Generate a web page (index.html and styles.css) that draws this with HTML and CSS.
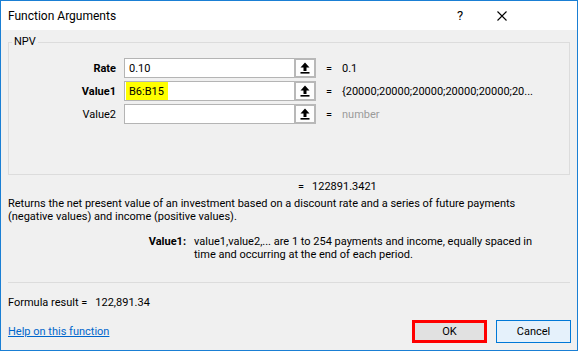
FILE: index.html
```html
<!DOCTYPE html>
<html>
<head>
<meta charset="utf-8">
<link rel="stylesheet" href="styles.css">
</head>
<body>
<div class="window">
  <div class="titlebar">
    <span class="title">Function Arguments</span>
    <span class="help">?</span>
    <span class="close">
      <svg width="10" height="10" viewBox="0 0 10 10"><path d="M0.5 0.5 L9.5 9.5 M9.5 0.5 L0.5 9.5" stroke="#000" stroke-width="1.1" fill="none"/></svg>
    </span>
  </div>
  <div class="content">
    <fieldset class="group">
      <legend>NPV</legend>
      <div class="args">
        <label class="lbl bold">Rate</label>
        <div class="input"><span>0.10</span></div>
        <button class="ref"><svg width="10" height="12" viewBox="0 0 10 12"><path d="M5 0.5 L9.5 5.5 L6.5 5.5 L6.5 9 L3.5 9 L3.5 5.5 L0.5 5.5 Z" fill="#000"/><rect x="0.5" y="10" width="9" height="1.6" fill="#000"/></svg></button>
        <span class="eq">=</span>
        <span class="val">0.1</span>

        <label class="lbl bold">Value1</label>
        <div class="input"><span class="hl">B6:B15</span></div>
        <button class="ref"><svg width="10" height="12" viewBox="0 0 10 12"><path d="M5 0.5 L9.5 5.5 L6.5 5.5 L6.5 9 L3.5 9 L3.5 5.5 L0.5 5.5 Z" fill="#000"/><rect x="0.5" y="10" width="9" height="1.6" fill="#000"/></svg></button>
        <span class="eq">=</span>
        <span class="val">{20000;20000;20000;20000;20000;20...</span>

        <label class="lbl">Value2</label>
        <div class="input"></div>
        <button class="ref"><svg width="10" height="12" viewBox="0 0 10 12"><path d="M5 0.5 L9.5 5.5 L6.5 5.5 L6.5 9 L3.5 9 L3.5 5.5 L0.5 5.5 Z" fill="#000"/><rect x="0.5" y="10" width="9" height="1.6" fill="#000"/></svg></button>
        <span class="eq">=</span>
        <span class="val muted">number</span>
      </div>
    </fieldset>
    <div class="result"><span class="eq2">=</span><span>122891.3421</span></div>
    <p class="desc">Returns the net present value of an investment based on a discount rate and a series of future payments (negative values) and income (positive values).</p>
    <div class="argdesc">
      <span class="argname">Value1:</span>
      <span class="argtext">value1,value2,... are 1 to 254 payments and income, equally spaced in time and occurring at the end of each period.</span>
    </div>
    <div class="sep"></div>
    <div class="formula"><span>Formula result =</span><span class="fval">122,891.34</span></div>
    <div class="footer">
      <a class="helplink" href="#">Help on this function</a>
      <div class="buttons">
        <button class="btn ok">OK</button>
        <button class="btn cancel">Cancel</button>
      </div>
    </div>
  </div>
</div>
</body>
</html>
```
FILE: styles.css
```css
* { box-sizing: border-box; }
html, body { margin: 0; padding: 0; }
body {
  font-family: "Segoe UI", Roboto, "Liberation Sans", sans-serif;
  font-size: 11px;
  color: #000;
  background: #fff;
}
.window {
  width: 578px;
  height: 351px;
  border: 1px solid #1a7fd4;
  background: #f0f0f0;
  display: flex;
  flex-direction: column;
}
.titlebar {
  height: 29px;
  background: #fff;
  display: flex;
  align-items: center;
  padding-left: 7px;
  font-size: 12px;
}
.title { flex: 1; }
.help { width: 40px; font-size: 13px; }
.close { width: 10px; display: flex; align-items: center; margin-right: 70px; }
.content {
  flex: 1;
  padding: 0 7px;
  display: flex;
  flex-direction: column;
}
.group {
  margin: 5px 0 0 0;
  padding: 0 0 50px 0;
  border: 1px solid #dcdcdc;
  min-width: 0;
}
.group legend {
  margin-left: 3px;
  padding: 0 2px;
  font-size: 11px;
  line-height: 14px;
}
.args {
  display: grid;
  grid-template-columns: 115px 170px 22px 26px 1fr;
  grid-auto-rows: 20px;
  row-gap: 3px;
  margin-top: 9px;
  align-items: center;
}
.lbl { text-align: right; padding-right: 8px; }
.bold { font-weight: bold; }
.input {
  height: 20px;
  background: #fff;
  border: 1px solid #b4b4b4;
  border-right: none;
  display: flex;
  align-items: center;
  padding-left: 1px;
}
.input span { padding-left: 3px; }
.input .hl {
  background: #ffff00;
  height: 18px;
  display: flex;
  align-items: center;
  padding: 0 4px 0 3px;
}
.ref {
  height: 20px;
  width: 22px;
  border: 2px solid #b8b8b8;
  background: #fdfdfd;
  padding: 0;
  display: flex;
  align-items: center;
  justify-content: center;
}
.eq { padding-left: 10px; }
.val { white-space: nowrap; }
.muted { color: #9b9b9b; }
.result {
  margin-top: 5px;
  padding-left: 290px;
  height: 14px;
  line-height: 14px;
}
.eq2 { margin-right: 8px; }
.desc {
  margin: 3px 0 0 0;
  line-height: 13px;
  max-width: 525px;
}
.argdesc {
  display: flex;
  margin-top: 12px;
  line-height: 13px;
}
.argname { width: 186px; text-align: right; padding-right: 8px; font-weight: bold; flex: none; }
.argtext { width: 340px; flex: none; }
.sep {
  margin-top: 21px;
  height: 1px;
  background: #dcdcdc;
}
.formula {
  margin-top: 13px;
  height: 14px;
  line-height: 14px;
}
.fval { margin-left: 8px; }
.footer {
  margin-top: 10px;
  display: flex;
  align-items: center;
  justify-content: space-between;
}
.helplink { color: #0066cc; text-decoration: underline; }
.buttons { display: flex; gap: 9px; margin-right: -1px; }
.btn {
  width: 75px;
  height: 23px;
  font-family: inherit;
  font-size: 11px;
  padding: 0;
}
.ok { background: #e1e1e1; border: 3px solid #ff0000; }
.cancel { background: #e5f1fb; border: 1px solid #0078d7; }
```
